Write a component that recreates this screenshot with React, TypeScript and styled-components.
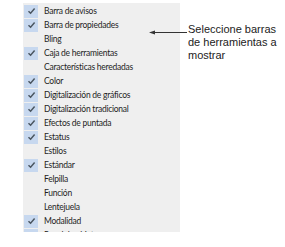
import { FC } from 'react';
import styled, { createGlobalStyle } from 'styled-components';

const GlobalStyle = createGlobalStyle`
    html, body { margin: 0; padding: 0; background: #ffffff; }
`;

type Item = { label: string; checked: boolean };

const items: Item[] = [
    { label: 'Barra de avisos', checked: true },
    { label: 'Barra de propiedades', checked: true },
    { label: 'Bling', checked: false },
    { label: 'Caja de herramientas', checked: true },
    { label: 'Características heredadas', checked: false },
    { label: 'Color', checked: true },
    { label: 'Digitalización de gráficos', checked: true },
    { label: 'Digitalización tradicional', checked: true },
    { label: 'Efectos de puntada', checked: true },
    { label: 'Estatus', checked: true },
    { label: 'Estilos', checked: false },
    { label: 'Estándar', checked: true },
    { label: 'Felpilla', checked: false },
    { label: 'Función', checked: false },
    { label: 'Lentejuela', checked: false },
    { label: 'Modalidad', checked: true },
    { label: 'Panel de objetos', checked: true },
];

const Check: FC = () => (
    <svg width="9" height="8" viewBox="0 0 9 8">
        <path d="M1.5 4.2 L3.6 6.2 L7.6 1.6" fill="none" stroke="#4a5560" strokeWidth="1.5" />
    </svg>
);

export const App: FC = () => {
    return (
        <Page>
            <GlobalStyle />
            <Menu>
                {items.map((item) => (
                    <Row key={item.label}>
                        <Box $checked={item.checked}>{item.checked && <Check />}</Box>
                        <Label>{item.label}</Label>
                    </Row>
                ))}
            </Menu>
            <Callout>
                <Arrow width="38" height="7" viewBox="0 0 38 7">
                    <line x1="3" y1="3.5" x2="38" y2="3.5" stroke="#333" strokeWidth="1" />
                    <path d="M0 3.5 L6 1.5 L6 5.5 Z" fill="#333" />
                </Arrow>
                <Note>Seleccione barras de herramientas a mostrar</Note>
            </Callout>
        </Page>
    );
};

const Page = styled.div`
    position: relative;
    width: 285px;
    height: 247px;
    overflow: hidden;
    padding: 3px 0 0 23px;
    box-sizing: border-box;
`;

const Menu = styled.div`
    display: flex;
    flex-direction: column;
    width: 157px;
    height: 229px;
    background: #efefef;
    overflow: hidden;
    padding-top: 1px;
    box-sizing: border-box;
`;

const Row = styled.div`
    display: flex;
    align-items: center;
    height: 14px;
    flex-shrink: 0;
`;

const Box = styled.div<{ $checked: boolean }>`
    display: flex;
    align-items: center;
    justify-content: center;
    width: 14px;
    height: 13px;
    margin-left: 1px;
    background: ${(p) => (p.$checked ? '#c7d8ef' : 'transparent')};
`;

const Label = styled.span`
    margin-left: 6px;
    font-family: Lato, 'Noto Sans', sans-serif;
    font-size: 8.5px;
    letter-spacing: -0.25px;
    color: #1e1e1e;
    white-space: nowrap;
`;

const Callout = styled.div`
    position: absolute;
    left: 149px;
    top: 23px;
    display: flex;
    align-items: flex-start;
`;

const Arrow = styled.svg`
    margin-top: 6px;
    flex-shrink: 0;
`;

const Note = styled.div`
    width: 100px;
    margin-left: 1px;
    font-family: 'Liberation Sans', Arial, sans-serif;
    font-size: 11px;
    line-height: 13px;
    color: #222;
`;

export default App;
